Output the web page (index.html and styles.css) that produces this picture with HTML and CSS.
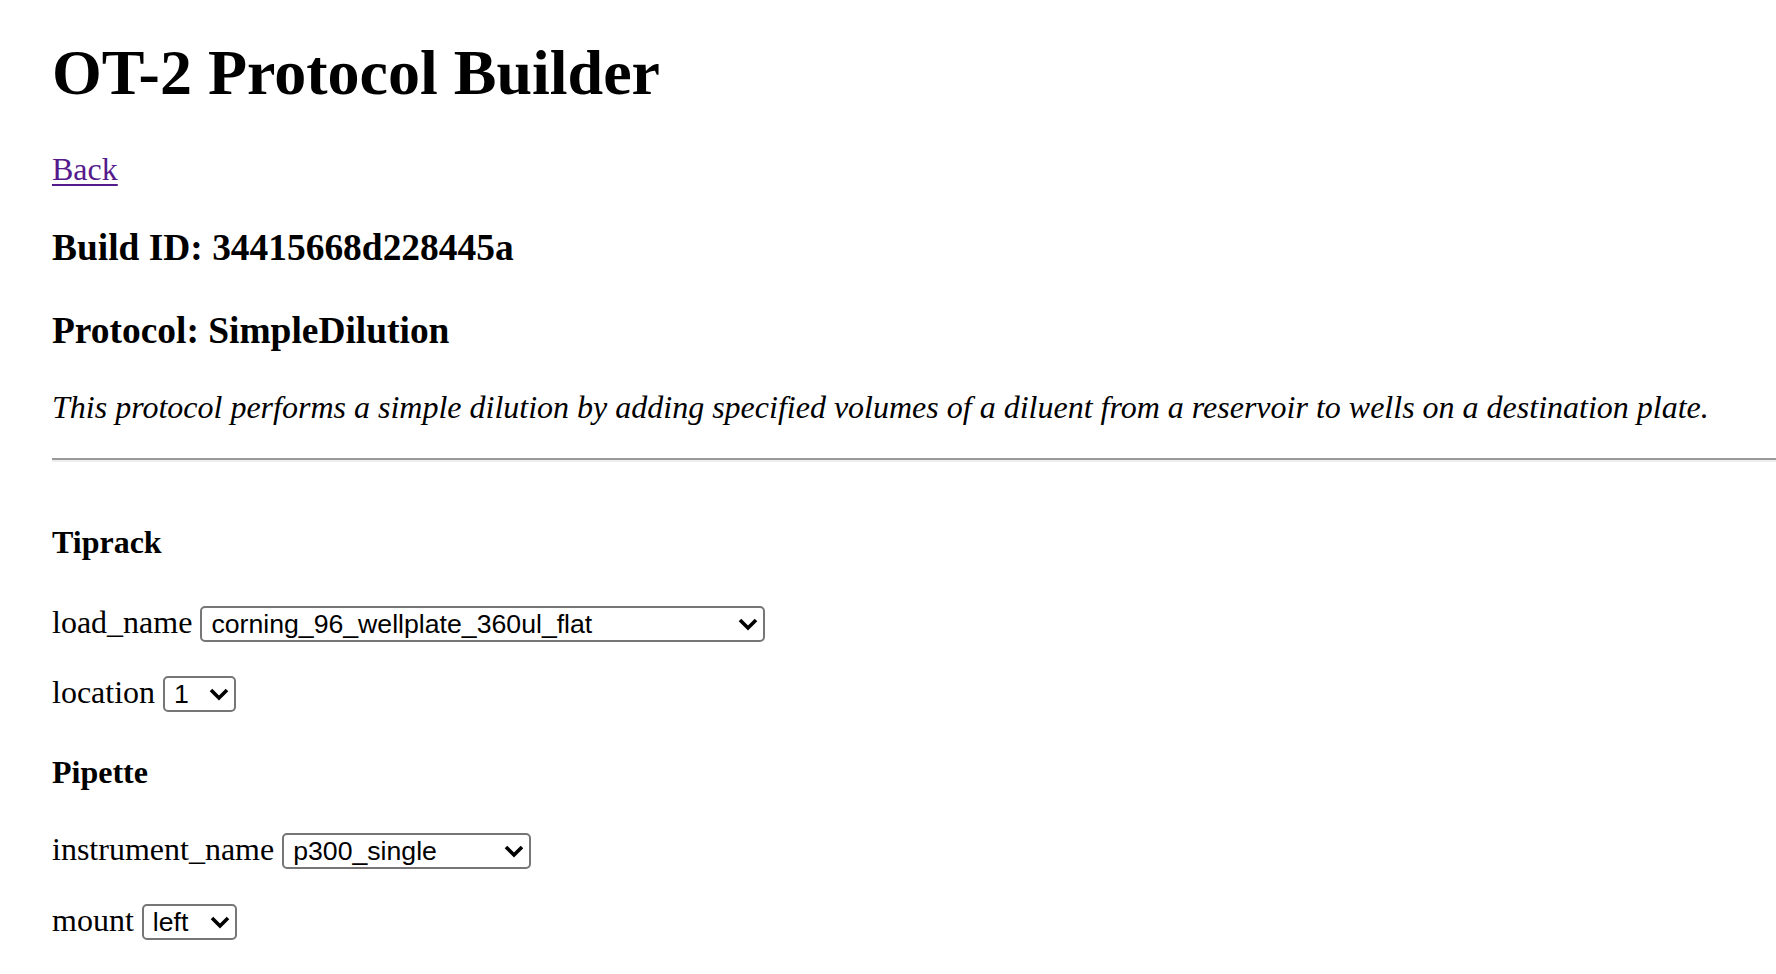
FILE: index.html
```html
<!DOCTYPE html>
<html lang="en">
<head>
<meta charset="utf-8">
<title>OT-2 Protocol Builder</title>
<link rel="stylesheet" href="styles.css">
</head>
<body>
<h1 class="title">OT-2 Protocol Builder</h1>
<p class="back"><a href="#">Back</a></p>
<h3 class="meta meta-build">Build ID: 34415668d228445a</h3>
<h3 class="meta meta-protocol">Protocol: SimpleDilution</h3>
<p class="desc">This protocol performs a simple dilution by adding specified volumes of a diluent from a reservoir to wells on a destination plate.</p>
<hr class="rule">
<form class="form">
  <h4 class="section section-first">Tiprack</h4>
  <div class="row row-first">
    <label class="label" for="tr-load">load_name</label>
    <span class="select-wrap">
      <select id="tr-load" class="select w-load">
        <option>corning_96_wellplate_360ul_flat</option>
      </select>
      <svg class="chev" width="22" height="14" viewBox="0 0 22 14"><polyline points="3,3 11,11 19,3" fill="none" stroke="#000" stroke-width="3.6"/></svg>
    </span>
  </div>
  <div class="row row-second">
    <label class="label" for="tr-loc">location</label>
    <span class="select-wrap">
      <select id="tr-loc" class="select w-loc">
        <option>1</option>
      </select>
      <svg class="chev" width="22" height="14" viewBox="0 0 22 14"><polyline points="3,3 11,11 19,3" fill="none" stroke="#000" stroke-width="3.6"/></svg>
    </span>
  </div>
  <h4 class="section section-second">Pipette</h4>
  <div class="row row-third">
    <label class="label" for="pp-name">instrument_name</label>
    <span class="select-wrap">
      <select id="pp-name" class="select w-inst">
        <option>p300_single</option>
      </select>
      <svg class="chev" width="22" height="14" viewBox="0 0 22 14"><polyline points="3,3 11,11 19,3" fill="none" stroke="#000" stroke-width="3.6"/></svg>
    </span>
  </div>
  <div class="row row-fourth">
    <label class="label" for="pp-mount">mount</label>
    <span class="select-wrap">
      <select id="pp-mount" class="select w-mount">
        <option>left</option>
      </select>
      <svg class="chev" width="22" height="14" viewBox="0 0 22 14"><polyline points="3,3 11,11 19,3" fill="none" stroke="#000" stroke-width="3.6"/></svg>
    </span>
  </div>
</form>
</body>
</html>
```
FILE: styles.css
```css
html, body {
  background: #ffffff;
}
body {
  margin: 0;
  padding: 0 0 0 52px;
  font-family: "Liberation Serif", "Times New Roman", serif;
  font-size: 32px;
  color: #000000;
}
.title {
  font-size: 64px;
  line-height: 74px;
  font-weight: bold;
  margin: 36px 0 0;
}
.back {
  font-size: 32px;
  line-height: 37px;
  margin: 41px 0 0;
}
.back a {
  color: #551a8b;
  text-decoration: underline;
  text-decoration-thickness: 2px;
  text-underline-offset: 4px;
}
.meta {
  font-size: 37.44px;
  line-height: 43px;
  font-weight: bold;
  margin: 38px 0 0;
}
.meta-protocol {
  margin-top: 40px;
}
.desc {
  font-style: italic;
  font-size: 32px;
  line-height: 37px;
  margin: 37px 0 0;
  white-space: nowrap;
}
.rule {
  margin: 31.5px 0 0;
  height: 0;
  border: 0;
  border-top: 2px solid #9a9a9a;
  border-bottom: 2px solid #eeeeee;
}
.form {
  margin: 0;
}
.section {
  font-size: 32px;
  line-height: 37px;
  font-weight: bold;
  margin: 0;
}
.section-first {
  margin-top: 62px;
}
.section-second {
  margin-top: 42px;
}
.row {
  display: flex;
  align-items: center;
  gap: 8px;
  height: 36px;
}
.row-first {
  margin-top: 45px;
}
.row-second {
  margin-top: 34px;
}
.row-third {
  margin-top: 42.5px;
}
.row-fourth {
  margin-top: 35px;
}
.label {
  font-size: 32px;
  line-height: 32px;
  margin-bottom: 4px;
}
.select-wrap {
  position: relative;
  display: block;
  height: 36px;
}
.select {
  -webkit-appearance: none;
  appearance: none;
  box-sizing: border-box;
  height: 36px;
  margin: 0;
  padding: 0 0 0 9px;
  border: 2px solid #767676;
  border-radius: 5px;
  background: #ffffff;
  color: #000000;
  font-family: "Liberation Sans", Arial, sans-serif;
  font-size: 26.67px;
  display: block;
}
.w-load { width: 565px; }
.w-loc { width: 73px; }
.w-inst { width: 249px; }
.w-mount { width: 95px; }
.chev {
  position: absolute;
  right: 6px;
  top: 11px;
  pointer-events: none;
}
```
